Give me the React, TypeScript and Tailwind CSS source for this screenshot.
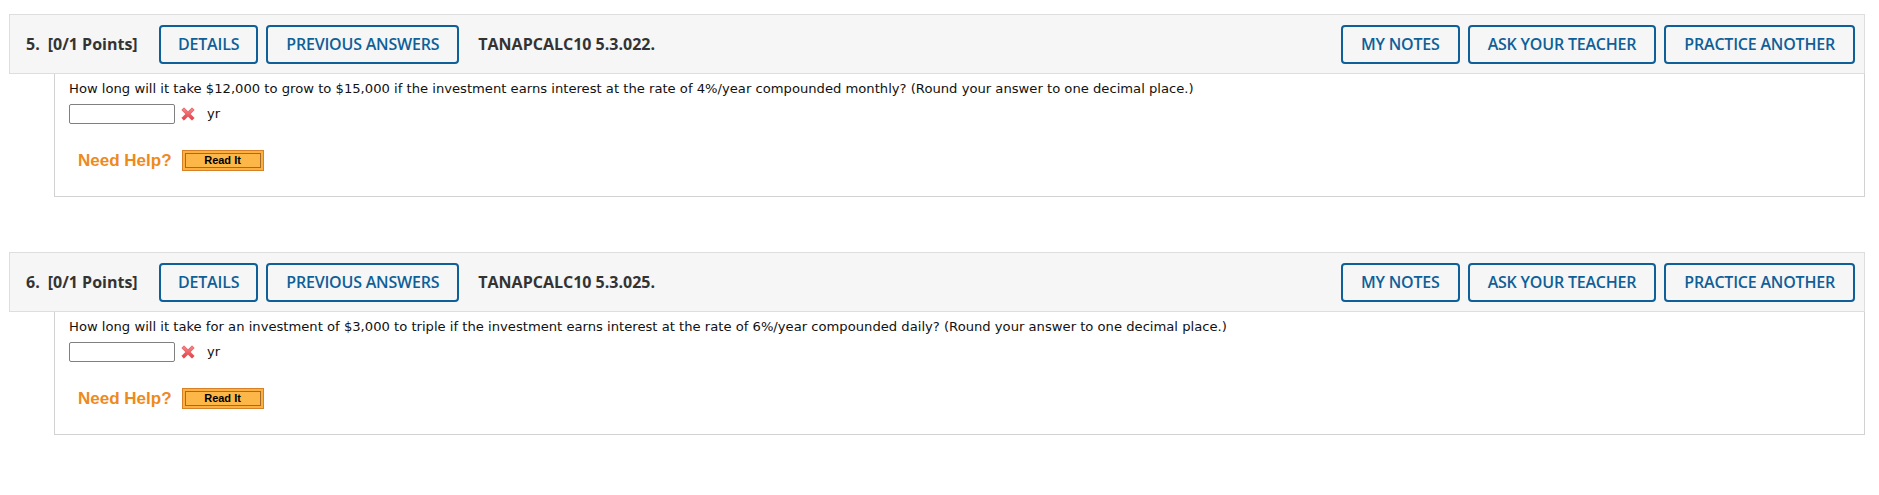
import React from 'react'

interface Item {
  num:      number
  code:     string
  question: string
}

const items: Item[] = [
  {
    num:      5,
    code:     'TANAPCALC10 5.3.022.',
    question: 'How long will it take $12,000 to grow to $15,000 if the investment earns interest at the rate of 4%/year compounded monthly? (Round your answer to one decimal place.)',
  },
  {
    num:      6,
    code:     'TANAPCALC10 5.3.025.',
    question: 'How long will it take for an investment of $3,000 to triple if the investment earns interest at the rate of 6%/year compounded daily? (Round your answer to one decimal place.)',
  },
]

function HeadButton({ label, px = 'px-[18px]' }: { label: string; px?: string }) {
  return (
    <button
      className={`h-[39px] ${px} rounded-[4px] border-2 border-[#0f5f98] bg-[#f6f6f6] text-[#0f5f98] text-[16px] font-semibold tracking-[-0.2px]`}
      style={{ fontFamily: '"Open Sans", sans-serif' }}
    >
      {label}
    </button>
  )
}

// red "wrong" cross next to the answer box
function WrongMark() {
  return (
    <svg width="14" height="14" viewBox="0 0 14 14">
      <defs>
        <linearGradient id="xg" x1="0" y1="0" x2="0" y2="1">
          <stop offset="0" stopColor="#f98a8d" />
          <stop offset="1" stopColor="#e03f45" />
        </linearGradient>
      </defs>
      <path d="M0.8 3 L3 0.8 L7 4.8 L11 0.8 L13.2 3 L9.2 7 L13.2 11 L11 13.2 L7 9.2 L3 13.2 L0.8 11 L4.8 7 Z" fill="url(#xg)" stroke="#e0474c" strokeWidth="0.7" strokeLinejoin="round" />
    </svg>
  )
}

function QuestionBlock({ item }: { item: Item }) {
  return (
    <div>
      <div className="flex items-center h-[60px] border border-[#dedede] bg-[#f6f6f6] pl-[16px] pr-[9px]">
        <div
          className="flex items-center text-[16px] font-bold text-[#333333] w-[133px] shrink-0"
          style={{ fontFamily: '"Open Sans", sans-serif' }}
        >
          <span>{item.num}.</span>
          <span className="ml-[8px]">[0/1 Points]</span>
        </div>
        <div className="flex items-center gap-[8px]">
          <HeadButton label="DETAILS" px="px-[17px]" />
          <HeadButton label="PREVIOUS ANSWERS" px="px-[18px]" />
        </div>
        <span
          className="ml-[19px] text-[16px] font-bold text-[#333333]"
          style={{ fontFamily: '"Open Sans", sans-serif' }}
        >
          {item.code}
        </span>
        <div className="ml-auto flex items-center gap-[8px]">
          <HeadButton label="MY NOTES" />
          <HeadButton label="ASK YOUR TEACHER" />
          <HeadButton label="PRACTICE ANOTHER" />
        </div>
      </div>

      <div className="ml-[45px] h-[123px] border-x border-b border-[#d2d2d2] bg-white pl-[14px] pt-[7px]">
        <p className="text-[13.15px] leading-[16px] text-[#111111]" style={{ fontFamily: '"DejaVu Sans", Verdana, sans-serif' }}>
          {item.question}
        </p>
        <div className="flex items-center mt-[7px] h-[20px]">
          <input className="w-[106px] h-[20px] border border-[#808080] rounded-[2px] bg-white" />
          <span className="ml-[6px] flex items-center"><WrongMark /></span>
          <span className="ml-[12px] text-[13px] text-[#111111]" style={{ fontFamily: '"DejaVu Sans", Verdana, sans-serif' }}>yr</span>
        </div>
        <div className="flex items-center mt-[26px] ml-[9px] h-[21px]">
          <span className="text-[17px] font-bold text-[#ee8a1d]" style={{ fontFamily: '"Liberation Sans", Arial, sans-serif' }}>
            Need Help?
          </span>
          <span className="ml-[10px] w-[82px] h-[21px] flex border border-[#d4812a] bg-[#fbb040] p-[2px]">
            <span
              className="flex-1 flex items-center justify-center border border-[#a4692b] bg-[#fdb748] text-[11px] font-bold text-black"
              style={{ fontFamily: '"Liberation Sans", Arial, sans-serif' }}
            >
              Read It
            </span>
          </span>
        </div>
      </div>
    </div>
  )
}

export default function App() {
  return (
    <div className="min-h-screen bg-white pt-[14px] pl-[9px] pr-[14px]">
      <QuestionBlock item={items[0]} />
      <div className="mt-[55px]">
        <QuestionBlock item={items[1]} />
      </div>
    </div>
  )
}
